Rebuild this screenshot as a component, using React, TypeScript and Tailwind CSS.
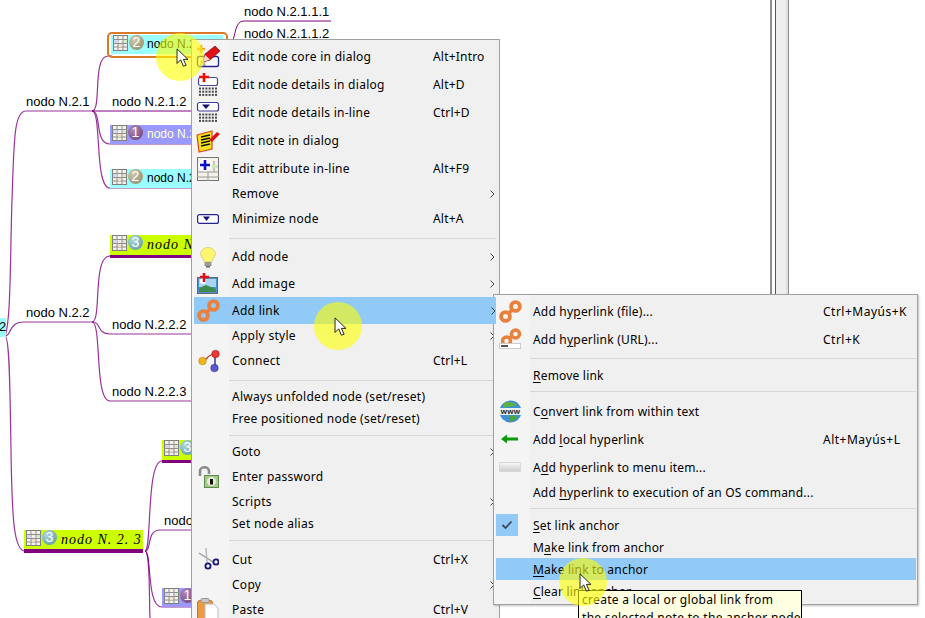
import React from 'react';

type Item = {
  h: number;
  label?: React.ReactNode;
  short?: string;
  arrow?: boolean;
  icon?: React.ReactNode;
  active?: boolean;
  checked?: boolean;
  sep?: boolean;
};

const PURPLE = '#800080';

const TableIcon = () => (
  <svg width="15" height="16" viewBox="0 0 15 16" className="shrink-0">
    <rect x="0.5" y="0.5" width="14" height="15" fill="#f4f2ea" stroke="#7d7d7d" />
    <path d="M0 4.5H15M0 8.5H15M0 12H15M5 0V16M10 0V16" stroke="#8f8f8f" strokeWidth="1" />
    <rect x="1" y="5" width="4" height="3" fill="#d5d5f5" />
    <rect x="11" y="5" width="3" height="3" fill="#d5ecc9" />
    <rect x="6" y="9" width="3" height="3" fill="#f5dcc9" />
  </svg>
);

const Badge = ({ n, cls }: { n: number; cls: string }) => (
  <span className={`w-[15px] h-[15px] rounded-full flex items-center justify-center text-[14px] leading-[15px] text-white shrink-0 font-['Liberation_Sans',sans-serif] ${cls}`}>
    {n}
  </span>
);

const OLIVE = 'bg-[radial-gradient(circle_at_35%_30%,#cfcab0,#8c8460)]';
const PLUM = 'bg-[radial-gradient(circle_at_35%_30%,#b08ab8,#6a3a70)]';
const TEAL = 'bg-[radial-gradient(circle_at_35%_30%,#b4d8dc,#4f939c)]';

// mind map nodes, these sit on a free canvas
const PlainNode = ({ x, y, text }: { x: number; y: number; text: string }) => (
  <span className="absolute text-[13px] leading-[16px] text-black whitespace-nowrap font-['Liberation_Sans',sans-serif]" style={{ left: x, top: y }}>
    {text}
  </span>
);

const IconNode = ({ x, y, w, h, bg, n, badge, text, textCls }: { x: number; y: number; w: number; h: number; bg: string; n: number; badge: string; text: string; textCls: string }) => (
  <div className={`absolute flex items-start gap-[1px] pl-[2px] whitespace-nowrap ${bg}`} style={{ left: x, top: y, width: w, height: h }}>
    <TableIcon />
    <Badge n={n} cls={badge} />
    <span className={textCls}>{text}</span>
  </div>
);

const MapLines = () => (
  <svg width="925" height="618" className="absolute left-0 top-0" fill="none" stroke={PURPLE}>
    <path d="M244 21H331" strokeWidth="1" />
    <path d="M227 46C237 46 232 21 244 21" strokeWidth="1" />
    <path d="M92 111H26C14 111 14 140 12 200C10 260 11 320 5 336" strokeWidth="1.2" strokeOpacity="0.8" />
    <path d="M92 111C102 111 92 56 108 56H112" strokeWidth="1.2" strokeOpacity="0.8" />
    <path d="M92 111H195" strokeWidth="1" />
    <path d="M92 111C102 111 94 144 110 144H195" strokeWidth="1.2" strokeOpacity="0.8" />
    <path d="M92 111C102 111 94 188 110 188H195" strokeWidth="1.2" strokeOpacity="0.8" />
    <path d="M5 336C12 336 8 322 24 322H92" strokeWidth="1.2" strokeOpacity="0.8" />
    <path d="M92 322C102 322 92 256 110 256" strokeWidth="1.2" strokeOpacity="0.8" />
    <path d="M92 322C102 322 96 334 110 334H195" strokeWidth="1.2" strokeOpacity="0.8" />
    <path d="M92 322C102 322 94 401 110 401H195" strokeWidth="1.2" strokeOpacity="0.8" />
    <path d="M5 336C10 336 10 400 11 450C12 520 14 551 25 551" strokeWidth="1.2" strokeOpacity="0.8" />
    <path d="M145 551C152 551 146 461 162 461" strokeWidth="1.2" strokeOpacity="0.8" />
    <path d="M145 551C152 551 146 530 160 530H195" strokeWidth="1.2" strokeOpacity="0.8" />
    <path d="M145 551C152 551 146 607 162 607H195" strokeWidth="1.2" strokeOpacity="0.8" />
    <path d="M145 551C150 551 149 590 150 618" strokeWidth="1.2" strokeOpacity="0.8" />
    <rect x="24" y="549" width="119" height="4" fill={PURPLE} stroke="none" />
    <rect x="110" y="254" width="85" height="4" fill={PURPLE} stroke="none" />
    <rect x="162" y="460" width="33" height="3" fill={PURPLE} stroke="none" />
  </svg>
);

const Cursor = ({ x, y }: { x: number; y: number }) => (
  <svg width="13" height="20" viewBox="0 0 14 22" className="absolute" style={{ left: x, top: y }}>
    <path d="M1 1V17L5 13L8 20L11 19L8 12.5H13Z" fill="#fff" stroke="#111" strokeWidth="1" strokeLinejoin="round" />
  </svg>
);

const Halo = ({ x, y }: { x: number; y: number }) => (
  <div className="absolute w-[48px] h-[48px] rounded-full bg-[#ffff00]/60" style={{ left: x - 24, top: y - 24 }} />
);

const Dots = ({ y }: { y: number }) => (
  <g fill="#4a4a4a">
    {[0, 1, 2, 3, 4, 5].map((i) =>
      [0, 1, 2].map((j) => <rect key={`${i}-${j}`} x={3 + i * 3.2} y={y + j * 3.2} width="2" height="2" />)
    )}
  </g>
);

const EditCore = () => (
  <svg width="24" height="24" viewBox="0 0 24 24">
    <rect x="1.5" y="11.5" width="21" height="10" rx="2" fill="#fff" stroke="#23238e" strokeWidth="1.3" />
    <path d="M5 0V8M1 4H9" stroke="#f2a23c" strokeWidth="2.5" />
    <text x="4" y="21" fontSize="8" fill="#777" fontFamily="Liberation Sans">N</text>
    <path d="M7 17L9 9L19 1L24 6L14 15Z" fill="#e01018" stroke="#500" strokeWidth="0.6" />
    <path d="M7 17L9 10L14 14.5Z" fill="#eadcc8" />
  </svg>
);

const EditDetails = () => (
  <svg width="24" height="24" viewBox="0 0 24 24">
    <rect x="2.5" y="4.5" width="19" height="8" rx="2" fill="#fff" stroke="#4a4a9e" strokeWidth="1.2" />
    <path d="M8 0V9M3 4H13" stroke="#e81010" strokeWidth="2.6" />
    <Dots y={14.5} />
  </svg>
);

const EditInline = () => (
  <svg width="24" height="24" viewBox="0 0 24 24">
    <rect x="1.5" y="1.5" width="21" height="8.5" rx="2" fill="#fff" stroke="#3b3ba0" strokeWidth="1.2" />
    <path d="M6 3.5H14L10 8Z" fill="#10106e" />
    <Dots y={12.5} />
  </svg>
);

const NoteIcon = () => (
  <svg width="24" height="24" viewBox="0 0 24 24">
    <path d="M1 6L16 2V20L3 23Z" fill="#f7e21c" stroke="#d8481c" strokeWidth="1.2" />
    <path d="M5 8L14 6M5 11L14 9M5 14L14 12M5 17L14 15" stroke="#111" strokeWidth="1.3" />
    <path d="M13 11L21 3L24 5L16 13Z" fill="#e01018" />
  </svg>
);

const AttrIcon = () => (
  <svg width="22" height="24" viewBox="0 0 22 24">
    <rect x="0.5" y="0.5" width="21" height="23" fill="#f3f1e8" stroke="#777" />
    <path d="M0 15H22M0 20H22M11 15V24M17 4V15" stroke="#999" />
    <rect x="15" y="8" width="6" height="3" fill="#cfe6c0" />
    <circle cx="8" cy="8" r="6.5" fill="#fff" />
    <path d="M8 3V13M3 8H13" stroke="#0a10c8" strokeWidth="2.6" />
  </svg>
);

const MinimizeIcon = () => (
  <svg width="22" height="10" viewBox="0 0 22 10">
    <rect x="0.6" y="0.6" width="20.8" height="8.8" rx="2" fill="#fff" stroke="#23238e" strokeWidth="1.2" />
    <path d="M6 2.5H13L9.5 7Z" fill="#10106e" />
  </svg>
);

const BulbIcon = () => (
  <svg width="16" height="21" viewBox="0 0 16 21">
    <path d="M8 0.5C3.5 0.5 0.8 3.5 0.8 7.2C0.8 10.5 4 12 4.5 15H11.5C12 12 15.2 10.5 15.2 7.2C15.2 3.5 12.5 0.5 8 0.5Z" fill="#fff56e" stroke="#d8d07a" />
    <rect x="4.5" y="15" width="7" height="4" fill="#9a9a92" />
    <rect x="6" y="19" width="4" height="1.5" fill="#66665f" />
  </svg>
);

const ImageIcon = () => (
  <svg width="22" height="22" viewBox="0 0 22 22">
    <rect x="0.5" y="4.5" width="20" height="16" fill="#4a92d0" stroke="#666" />
    <rect x="2" y="6" width="17" height="8" fill="#a8d6f2" />
    <path d="M2 19V15L9 12L19 16V19Z" fill="#3c8a50" />
    <circle cx="6" cy="8" r="3" fill="#fff" />
    <path d="M7 0V9M3 4H12" stroke="#e01018" strokeWidth="2.6" />
  </svg>
);

const LinkIcon = () => (
  <svg width="23" height="23" viewBox="0 0 23 23" fill="none" stroke="#e9803c" strokeWidth="3.8">
    <circle cx="6.5" cy="16.5" r="4.4" />
    <circle cx="16.5" cy="6.5" r="4.4" />
    <path d="M9 14L14 9" />
  </svg>
);

const UrlLinkIcon = () => (
  <svg width="23" height="23" viewBox="0 0 23 23" fill="none">
    <g stroke="#e9803c" strokeWidth="3.5">
      <circle cx="7.5" cy="13" r="4" />
      <circle cx="16.5" cy="6" r="4" />
      <path d="M10 10L14 8" />
    </g>
    <rect x="0.5" y="15.5" width="21" height="5" fill="#fff" stroke="#ccc" />
    <rect x="2" y="17" width="7" height="2" fill="#555" />
  </svg>
);

const ConnectIcon = () => (
  <svg width="24" height="24" viewBox="0 0 24 24">
    <path d="M7 12C11 12 11 5 19 5" fill="none" stroke="#c01818" strokeWidth="1.2" />
    <path d="M19 7L19 19" stroke="#2c2c8c" strokeWidth="1.4" />
    <circle cx="6.5" cy="12" r="3.8" fill="#f0b816" stroke="#b07810" strokeWidth="0.5" />
    <circle cx="19.5" cy="5" r="3.8" fill="#e83838" stroke="#a01010" strokeWidth="0.5" />
    <circle cx="18.5" cy="19" r="3.8" fill="#5858d0" stroke="#28287c" strokeWidth="0.5" />
  </svg>
);

const LockIcon = () => (
  <svg width="22" height="24" viewBox="0 0 22 24">
    <path d="M3 11V6C3 1 12 1 12 6V9" fill="none" stroke="#8a8a8a" strokeWidth="2.6" />
    <rect x="7.5" y="10.5" width="14" height="12" fill="#a4c88a" stroke="#5f8a4a" />
    <circle cx="14.5" cy="16.5" r="4.5" fill="#e4eed8" />
    <rect x="13" y="14" width="3" height="5.5" fill="#111" />
  </svg>
);

const ScissorsIcon = () => (
  <svg width="22" height="24" viewBox="0 0 22 24" fill="none">
    <path d="M2 5L16 14" stroke="#9a9aa0" strokeWidth="1.4" />
    <path d="M9 0L10 15" stroke="#b4b4ba" strokeWidth="1.4" />
    <circle cx="11" cy="18" r="2.6" stroke="#16167a" strokeWidth="1.8" />
    <circle cx="19" cy="14" r="2.6" stroke="#16167a" strokeWidth="1.8" />
  </svg>
);

const PasteIcon = () => (
  <svg width="22" height="24" viewBox="0 0 22 24">
    <rect x="0.5" y="2.5" width="15" height="20" rx="2.5" fill="#ee9a42" stroke="#c87020" />
    <rect x="4" y="0.5" width="8" height="4" rx="1" fill="#c8c8c8" stroke="#999" />
    <path d="M8 6H17L21 10V24H8Z" fill="#fff" stroke="#bbb" />
  </svg>
);

const GlobeIcon = () => (
  <svg width="23" height="23" viewBox="0 0 23 23">
    <circle cx="11.5" cy="11.5" r="11" fill="#3f8fd6" />
    <path d="M5 3C9 1 15 2 18 5C14 7 8 6 4 8Z" fill="#5fb23f" />
    <path d="M10 16C15 15 18 16 18 18C15 21 12 22 10 21Z" fill="#4da53a" />
    <rect x="0" y="8" width="23" height="7" fill="#eef2f5" />
    <text x="11.5" y="14" textAnchor="middle" fontSize="8" fontWeight="bold" fill="#222" fontFamily="Liberation Sans">www</text>
  </svg>
);

const GreenArrow = () => (
  <svg width="18" height="10" viewBox="0 0 18 10">
    <path d="M0 5L6 0.5V3.5H17V6.5H6V9.5Z" fill="#0a9a0a" />
  </svg>
);

const GrayBar = () => <div className="w-[22px] h-[10px] rounded-[1px] bg-gradient-to-b from-[#f4f4f4] to-[#cfcfcf] border border-[#d8d8d8]" />;

const U = ({ children }: { children: React.ReactNode }) => <span className="underline underline-offset-2">{children}</span>;

const mainItems: Item[] = [
  { h: 28, label: 'Edit node core in dialog', short: 'Alt+Intro', icon: <EditCore /> },
  { h: 28, label: 'Edit node details in dialog', short: 'Alt+D', icon: <EditDetails /> },
  { h: 28, label: 'Edit node details in-line', short: 'Ctrl+D', icon: <EditInline /> },
  { h: 28, label: 'Edit note in dialog', icon: <NoteIcon /> },
  { h: 28, label: 'Edit attribute in-line', short: 'Alt+F9', icon: <AttrIcon /> },
  { h: 22, label: 'Remove', arrow: true },
  { h: 28, label: 'Minimize node', short: 'Alt+A', icon: <MinimizeIcon /> },
  { h: 10, sep: true },
  { h: 28, label: 'Add node', arrow: true, icon: <BulbIcon /> },
  { h: 26, label: 'Add image', arrow: true, icon: <ImageIcon /> },
  { h: 27, label: 'Add link', arrow: true, icon: <LinkIcon />, active: true },
  { h: 23, label: 'Apply style', arrow: true },
  { h: 28, label: 'Connect', short: 'Ctrl+L', icon: <ConnectIcon /> },
  { h: 11, sep: true },
  { h: 22, label: 'Always unfolded node (set/reset)' },
  { h: 22, label: 'Free positioned node (set/reset)' },
  { h: 11, sep: true },
  { h: 22, label: 'Goto', arrow: true },
  { h: 28, label: 'Enter password', icon: <LockIcon /> },
  { h: 22, label: 'Scripts', arrow: true },
  { h: 22, label: 'Set node alias' },
  { h: 11, sep: true },
  { h: 28, label: 'Cut', short: 'Ctrl+X', icon: <ScissorsIcon /> },
  { h: 22, label: 'Copy', arrow: true },
  { h: 28, label: 'Paste', short: 'Ctrl+V', icon: <PasteIcon /> },
];

const subItems: Item[] = [
  { h: 28, label: <>Add hy<U>p</U>erlink (file)...</>, short: 'Ctrl+Mayús+K', icon: <LinkIcon /> },
  { h: 28, label: <>Add h<U>y</U>perlink (URL)...</>, short: 'Ctrl+K', icon: <UrlLinkIcon /> },
  { h: 11, sep: true },
  { h: 22, label: <><U>R</U>emove link</> },
  { h: 11, sep: true },
  { h: 28, label: <>C<U>o</U>nvert link from within text</>, icon: <GlobeIcon /> },
  { h: 28, label: <>Add <U>l</U>ocal hyperlink</>, short: 'Alt+Mayús+L', icon: <GreenArrow /> },
  { h: 28, label: <>A<U>d</U>d hyperlink to menu item...</>, icon: <GrayBar /> },
  { h: 22, label: <>Add <U>h</U>yperlink to execution of an OS command...</> },
  { h: 11, sep: true },
  { h: 22, label: <><U>S</U>et link anchor</>, checked: true },
  { h: 22, label: <>M<U>a</U>ke link from anchor</> },
  { h: 22, label: <><U>M</U>ake link to anchor</>, active: true },
  { h: 22, label: <><U>C</U>lear link anchor</> },
];

const Chevron = ({ cls }: { cls: string }) => (
  <svg width="5" height="8" viewBox="0 0 5 8" fill="none" stroke="#444" className={cls}>
    <path d="M0.5 0.5L4 4L0.5 7.5" />
  </svg>
);

const MainRow = ({ item }: { item: Item }) => {
  if (item.sep) {
    return (
      <div className="flex items-center pl-[35px]" style={{ height: item.h }}>
        <div className="w-full h-[1px] bg-[#d7d7d7]" />
      </div>
    );
  }
  return (
    <div className={`flex items-center relative ${item.active ? 'bg-[#91c9f7]' : ''}`} style={{ height: item.h }}>
      <div className="w-[28px] mr-[10px] flex items-center justify-center shrink-0">{item.icon}</div>
      <span className="w-[201px] whitespace-nowrap shrink-0 tracking-[0.27px]">{item.label}</span>
      <span className="whitespace-nowrap">{item.short}</span>
      {item.arrow && <Chevron cls="absolute right-[1px] top-1/2 -translate-y-1/2" />}
    </div>
  );
};

const SubRow = ({ item }: { item: Item }) => {
  if (item.sep) {
    return (
      <div className="flex items-center pl-[34px]" style={{ height: item.h }}>
        <div className="w-full h-[1px] bg-[#d7d7d7]" />
      </div>
    );
  }
  return (
    <div className={`flex items-center relative ${item.active ? 'bg-[#91c9f7]' : ''}`} style={{ height: item.h }}>
      <div className="w-[28px] mr-[9px] flex items-center justify-center shrink-0">
        {item.checked ? (
          <div className="w-[22px] h-[22px] mr-[6px] bg-[#91c9f7] flex items-center justify-center">
            <svg width="12" height="10" viewBox="0 0 12 10" fill="none" stroke="#3a4a58" strokeWidth="1.8">
              <path d="M1.5 5L4.5 8L10.5 1.5" />
            </svg>
          </div>
        ) : (
          item.icon
        )}
      </div>
      <span className="w-[290px] whitespace-nowrap shrink-0 pt-[2px]">{item.label}</span>
      <span className="whitespace-nowrap pt-[2px] tracking-[0.5px]">{item.short}</span>
    </div>
  );
};

export default function App() {
  const menuText = "text-[12px] leading-[16px] text-black font-['Noto_Sans',sans-serif] tracking-[0.2px]";
  return (
    <div className="relative w-[925px] h-[618px] overflow-hidden bg-white">
      {/* splitter */}
      <div className="absolute left-[770px] top-0 w-[19px] h-[618px] flex">
        <div className="w-[2px] bg-[#8c8c8c]" />
        <div className="w-[3px] bg-[#fdfdfd]" />
        <div className="w-[1px] bg-[#555]" />
        <div className="w-[10px] bg-[#eeeeee]" />
        <div className="w-[2px] bg-[#e0e0e0]" />
        <div className="w-[1px] bg-[#8a8a92]" />
      </div>

      <MapLines />

      <PlainNode x={244} y={4} text="nodo N.2.1.1.1" />
      <PlainNode x={244} y={26} text="nodo N.2.1.1.2" />
      <PlainNode x={26} y={94} text="nodo N.2.1" />
      <PlainNode x={112} y={94} text="nodo N.2.1.2" />
      <PlainNode x={26} y={305} text="nodo N.2.2" />
      <PlainNode x={112} y={317} text="nodo N.2.2.2" />
      <PlainNode x={112} y={384} text="nodo N.2.2.3" />
      <PlainNode x={164} y={513} text="nodo" />
      <div className="absolute left-0 top-[318px] w-[6px] h-[19px] bg-[#99ffff] text-[13px] leading-[18px] overflow-hidden font-['Liberation_Sans',sans-serif]">
        <span className="block -ml-[1px]">2</span>
      </div>

      <div className="absolute left-[107px] top-[32px] w-[121px] h-[26px] rounded-[5px] border-[2px] border-[#d87a28]" />
      <IconNode x={111} y={35} w={112} h={19} bg="bg-[#99ffff]" n={2} badge={OLIVE} text="nodo N.2.1.1" textCls="text-[12px] leading-[19px] ml-[2px] text-black font-['Liberation_Sans',sans-serif]" />
      <IconNode x={110} y={125} w={85} h={19} bg="bg-[#9999ff]" n={1} badge={PLUM} text="nodo N.2.1.3" textCls="text-[12px] leading-[19px] ml-[3px] text-[#ffffcc] font-['Liberation_Sans',sans-serif]" />
      <IconNode x={110} y={169} w={85} h={19} bg="bg-[#99ffff]" n={2} badge={OLIVE} text="nodo N.2.1.4" textCls="text-[12px] leading-[19px] ml-[3px] text-black font-['Liberation_Sans',sans-serif]" />
      <IconNode x={110} y={235} w={85} h={20} bg="bg-[#ccff00]" n={3} badge={TEAL} text="nodo N.2.2.1" textCls="text-[14px] leading-[20px] ml-[3px] italic tracking-[1px] text-black font-['Liberation_Serif',serif]" />
      <IconNode x={162} y={440} w={33} h={20} bg="bg-[#ccff00]" n={3} badge={TEAL} text="nodo" textCls="text-[14px] leading-[20px] ml-[3px] italic text-black font-['Liberation_Serif',serif]" />
      <IconNode x={24} y={530} w={119} h={19} bg="bg-[#ccff00]" n={3} badge={TEAL} text="nodo N. 2. 3" textCls="text-[14px] leading-[20px] ml-[3px] italic tracking-[1px] text-black font-['Liberation_Serif',serif]" />
      <IconNode x={162} y={588} w={33} h={19} bg="bg-[#9999ff]" n={1} badge={PLUM} text="nodo" textCls="text-[12px] leading-[19px] ml-[3px] text-[#ffffcc] font-['Liberation_Sans',sans-serif]" />

      {/* main context menu */}
      <div className={`absolute left-[191px] top-[39px] w-[309px] h-[600px] bg-[#f0f0f0] border border-[#a0a0a0] pt-[3px] pl-[2px] pr-[3px] ${menuText}`}>
        <div className="absolute left-0 top-0 bottom-0 w-[37px] bg-[#f4f4f4]" />
        {mainItems.map((item, i) => (
          <MainRow key={i} item={item} />
        ))}
      </div>

      {/* submenu */}
      <div className={`absolute left-[493px] top-[294px] w-[425px] h-[311px] bg-[#f0f0f0] border border-[#a0a0a0] shadow-[1px_1px_2px_rgba(0,0,0,0.25)] pt-[2px] pl-[2px] pr-[1px] ${menuText}`}>
        <div className="absolute left-0 top-0 bottom-0 w-[36px] bg-[#f4f4f4]" />
        {/* the parent row's highlight runs over the submenu's edge */}
        <div className="absolute left-[-4px] top-[2px] w-[6px] h-[27px] bg-[#91c9f7] flex items-center">
          <Chevron cls="ml-[1px]" />
        </div>
        {subItems.map((item, i) => (
          <SubRow key={i} item={item} />
        ))}
      </div>

      {/* tooltip */}
      <div className={`absolute left-[578px] top-[590px] w-[224px] h-[60px] bg-[#ffffe1] border border-black pl-[3px] tracking-[0.3px] ${menuText}`}>
        <div className="whitespace-nowrap leading-[18px]">create a local or global link from</div>
        <div className="whitespace-nowrap leading-[18px]">the selected note to the anchor node</div>
      </div>

      <Halo x={180} y={57} />
      <Halo x={338} y={326} />
      <Halo x={583} y={582} />
      <Cursor x={176} y={48} />
      <Cursor x={334} y={317} />
      <Cursor x={579} y={573} />
    </div>
  );
}
